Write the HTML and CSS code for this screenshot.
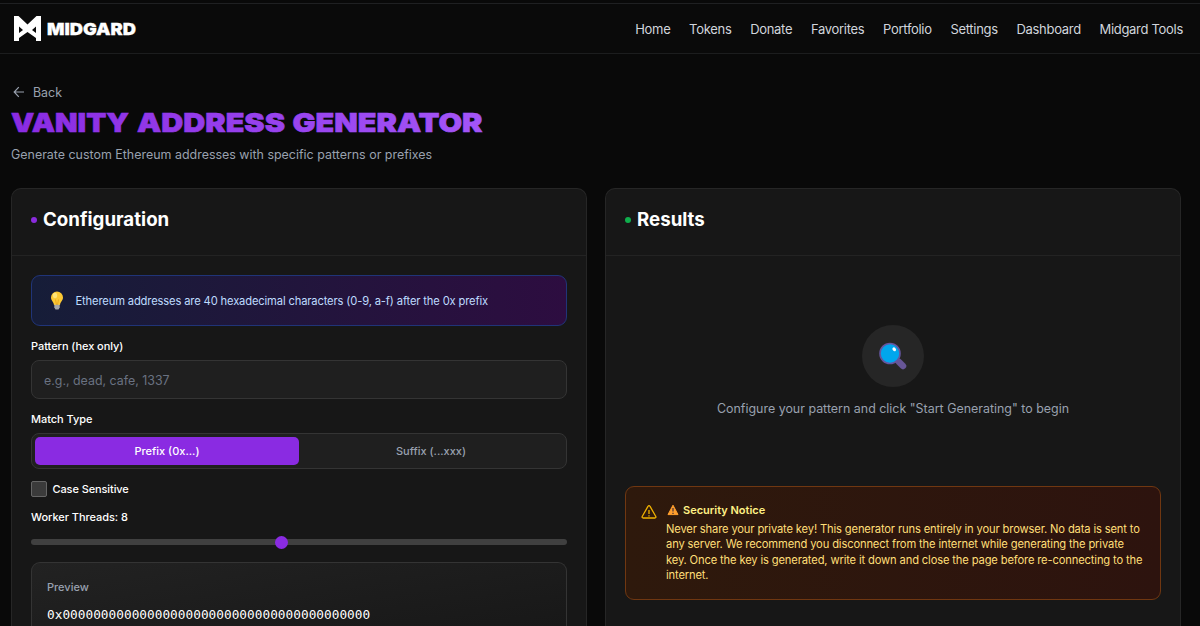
FILE: index.html
```html
<!DOCTYPE html>
<html lang="en">
<head>
<meta charset="utf-8">
<title>Midgard - Vanity Address Generator</title>
<link rel="stylesheet" href="styles.css">
</head>
<body>
<header class="topbar">
  <a class="brand">
    <svg class="brand-mark" viewBox="0 0 27 25"><path fill="#fff" fill-rule="evenodd" d="M0 0H4.500L13.500 8.500 22.500 0H27V25H22V22L13.500 16 5 22V25H0ZM5 10.500V17L9 14ZM22 10.500 18 14 22 17Z"/></svg>
    <svg class="brand-name" viewBox="0 0 90 18"><text x="0" y="15" textLength="89" lengthAdjust="spacingAndGlyphs">MIDGARD</text></svg>
  </a>
  <nav class="nav">
    <a>Home</a><a>Tokens</a><a>Donate</a><a>Favorites</a><a>Portfolio</a><a>Settings</a><a>Dashboard</a><a>Midgard Tools</a>
  </nav>
</header>
<main class="page">
  <a class="back"><svg viewBox="0 0 12 12"><path d="M11 6H1.200M5.800 1.200 1.200 6l4.600 4.800" fill="none" stroke="currentColor" stroke-width="1.200"/></svg><span>Back</span></a>
  <h1 class="title">
    <svg viewBox="0 0 474 28"><defs><linearGradient id="violet" gradientUnits="userSpaceOnUse" x1="0" y1="0" x2="474" y2="0"><stop offset="0" stop-color="#8a2be2"/><stop offset="1" stop-color="#a355f7"/></linearGradient></defs>
    <g fill="url(#violet)" stroke="url(#violet)"><text x="0" y="24" textLength="118" lengthAdjust="spacingAndGlyphs">VANITY</text><text x="126" y="24" textLength="148" lengthAdjust="spacingAndGlyphs">ADDRESS</text><text x="281.500" y="24" textLength="190" lengthAdjust="spacingAndGlyphs">GENERATOR</text></g></svg>
  </h1>
  <p class="subtitle">Generate custom Ethereum addresses with specific patterns or prefixes</p>
  <div class="columns">
    <section class="card">
      <h2 class="card-head"><i class="dot"></i>Configuration</h2>
      <div class="card-body">
        <div class="tip">
          <svg class="bulb" viewBox="0 0 14 19"><path d="M7 .5A6 6 0 0 0 1 6.500C1 9.500 3.500 10.500 4 14h6c.5-3.500 3-4.500 3-7.500A6 6 0 0 0 7 .5Z" fill="#fcc934"/><ellipse cx="5" cy="4.500" rx="2.200" ry="2.800" fill="#ffe477"/><path d="M5.500 8.500 6.500 14h1l1-5.500" fill="none" stroke="#e39b16" stroke-width=".7"/><path d="M4.300 13.800h5.400v2.700L8.500 18.500h-3l-1.200-2Z" fill="#a5a8ab"/></svg>
          <span>Ethereum addresses are 40 hexadecimal characters (0-9, a-f) after the 0x prefix</span>
        </div>
        <label class="label">Pattern (hex only)</label>
        <input class="field" placeholder="e.g., dead, cafe, 1337">
        <label class="label">Match Type</label>
        <div class="toggle"><button class="on">Prefix (0x...)</button><button>Suffix (...xxx)</button></div>
        <label class="check"><i></i><span>Case Sensitive</span></label>
        <label class="label">Worker Threads: 8</label>
        <div class="slider"><i></i></div>
        <div class="preview"><p>Preview</p><code>0x0000000000000000000000000000000000000000</code></div>
      </div>
    </section>
    <section class="card">
      <h2 class="card-head"><i class="dot green"></i>Results</h2>
      <div class="card-body">
        <div class="empty">
          <div class="lens"><svg viewBox="0 0 28 28"><path d="m20 20 4 4" stroke="#675697" stroke-width="6.500" stroke-linecap="round"/><path d="m16 16 4 4" stroke="#675697" stroke-width="3"/><circle cx="11" cy="11.500" r="10" fill="#00a6ed" stroke="#6556a0" stroke-width="1.600"/><ellipse cx="15.200" cy="7.300" rx="1.600" ry="2.100" transform="rotate(-40 15.200 7.300)" fill="#fff"/></svg></div>
          <p>Configure your pattern and click "Start Generating" to begin</p>
        </div>
        <div class="notice">
          <svg class="warn" viewBox="0 0 16 16"><path d="M7.100 2.100a1 1 0 0 1 1.800 0l5.900 10.400a1 1 0 0 1-.9 1.500H2.100a1 1 0 0 1-.9-1.500ZM8 6v4M8 11.200v1.200" fill="none" stroke="#f0b100" stroke-width="1.300"/></svg>
          <div>
            <h3><svg viewBox="0 0 12 12"><path d="M6 1.200 11 10.600H1Z" fill="#ff9f2e" stroke="#ff9f2e" stroke-linejoin="round"/><path d="M6 4v3.500M6 8.700v1.200" stroke="#402c38" stroke-width="1.200"/></svg>Security Notice</h3>
            <p>Never share your private key! This generator runs entirely in your browser. No data is sent to<br>any server. We recommend you disconnect from the internet while generating the private<br>key. Once the key is generated, write it down and close the page before re-connecting to the<br>internet.</p>
          </div>
        </div>
      </div>
    </section>
  </div>
</main>
</body>
</html>
```
FILE: styles.css
```css
* { box-sizing: border-box; margin: 0; padding: 0; }
html, body { height: 626px; overflow: hidden; }
body { padding-top: 3px; background: #090909; color: #fff; font-family: Inter, sans-serif; font-size: 12.4px; }
svg { display: block; flex: none; }
.topbar { height: 51px; border-top: 1px solid #1f2022; border-bottom: 1px solid #1c1d1e; display: flex; align-items: center; justify-content: space-between; padding: 0 17px 0 14px; background: #0a0a0a; }
.brand { display: flex; align-items: center; gap: 6px; }
.brand-mark { width: 27px; height: 25px; }
.brand-name { width: 90px; height: 18px; overflow: visible; }
.brand-name text { font-size: 16.500px; font-weight: 900; fill: #fff; stroke: #fff; stroke-width: .3px; }
.nav { display: flex; gap: 18.700px; color: #d1d5dc; font-size: 13px; letter-spacing: -.3px; white-space: nowrap; padding-top: 1px; }
.page { height: 572px; overflow: hidden; padding: 30px 19px 0 11px; }
.back { display: flex; align-items: center; gap: 8px; height: 16px; padding-left: 2px; color: #99a1af; }
.back svg { width: 12px; height: 12px; }
.title { height: 28px; margin-top: 8px; }
.title svg { width: 474px; height: 28px; overflow: visible; }
.title text { font-size: 26px; font-weight: 900; stroke-width: .6px; }
.subtitle { margin-top: 9px; height: 19px; line-height: 19px; color: #99a1af; font-size: 12.450px; white-space: nowrap; }
.columns { display: grid; grid-template-columns: minmax(0, 1fr) minmax(0, 1fr); gap: 18px; margin-top: 24px; }
.card { height: 438px; overflow: hidden; border: 1px solid #262626; border-bottom: 0; border-radius: 10px 10px 0 0; background: #171717; }
.card-head { height: 67px; padding: 0 19px 5px; border-bottom: 1px solid #232323; display: flex; align-items: center; gap: 6px; font-size: 18.700px; font-weight: 650; }
.dot { width: 6px; height: 6px; border-radius: 50%; background: #8a2bdc; }
.green { background: #0fae4c; }
.card-body { padding: 19px 19px 0; }
.tip { height: 51px; border: 1px solid #203478; border-radius: 9px; background: linear-gradient(90deg, #161d38, #2d0d40); display: flex; align-items: center; gap: 12px; padding-left: 17.500px; color: #bedbff; font-size: 11.200px; letter-spacing: -.15px; white-space: nowrap; }
.bulb { width: 14px; height: 19px; }
.label { display: block; height: 16px; line-height: 17px; margin-top: 12px; font-size: 11px; letter-spacing: -.05px; font-weight: 500; }
.field { display: block; width: 100%; height: 39px; margin-top: 6px; padding: 1px 12px 0; border: 1px solid #343434; border-radius: 8px; background: #1f1f1f; color: #fff; font: 12.400px Inter, sans-serif; }
.field::placeholder { color: #6a7282; }
.toggle { display: grid; grid-template-columns: 1fr 1fr; height: 36px; margin-top: 6px; padding: 3px; border: 1px solid #343434; border-radius: 8px; background: #1f1f1f; }
.toggle button { border: 0; border-radius: 5px; background: none; color: #99a1af; font: 500 11px Inter, sans-serif; }
.toggle .on { background: #8a2be2; color: #fff; }
.check { display: flex; align-items: center; gap: 5.500px; height: 16px; margin-top: 12px; font-size: 11px; letter-spacing: -.1px; font-weight: 500; }
.check i { width: 16px; height: 16px; border: 1px solid #666; border-radius: 2px; background: #3b3b3b; }
.slider { display: flex; align-items: center; height: 6px; margin-top: 14px; padding-left: 244px; border-radius: 3px; background: #404040; }
.slider i { width: 13px; height: 13px; border-radius: 50%; background: #8a2be2; }
.preview { height: 64px; margin-top: 17px; padding: 16px 15px 0; border: 1px solid #343434; border-bottom: 0; border-radius: 9px 9px 0 0; background: linear-gradient(170deg, #222, #181818); }
.preview p { height: 16px; line-height: 16px; color: #99a1af; font-size: 11px; font-weight: 500; }
.preview code { display: block; margin-top: 12px; font: 12.790px "DejaVu Sans Mono", monospace; }
.empty { height: 192px; padding-top: 50px; display: flex; flex-direction: column; align-items: center; }
.lens { width: 62px; height: 62px; border-radius: 50%; background: #262626; display: grid; place-items: center; }
.lens svg { width: 28px; height: 28px; }
.empty p { margin-top: 12px; line-height: 19px; color: #99a1af; font-size: 12.450px; white-space: nowrap; }
.notice { height: 114px; margin-top: 19px; padding: 15px 15px 0; border: 1px solid #703711; border-radius: 9px; background: linear-gradient(90deg, #2e190c, #2d130e); display: flex; gap: 9px; color: #ffdf78; font-size: 11.200px; letter-spacing: -.15px; white-space: nowrap; }
.warn { width: 16px; height: 16px; margin-top: 2px; }
.notice h3 { display: flex; align-items: center; gap: 4px; height: 16px; padding-left: 1px; color: #fff085; font-size: 11px; letter-spacing: 0; font-weight: 600; }
.notice h3 svg { width: 12px; height: 12px; }
.notice p { margin-top: 3.500px; line-height: 15.500px; }
```
